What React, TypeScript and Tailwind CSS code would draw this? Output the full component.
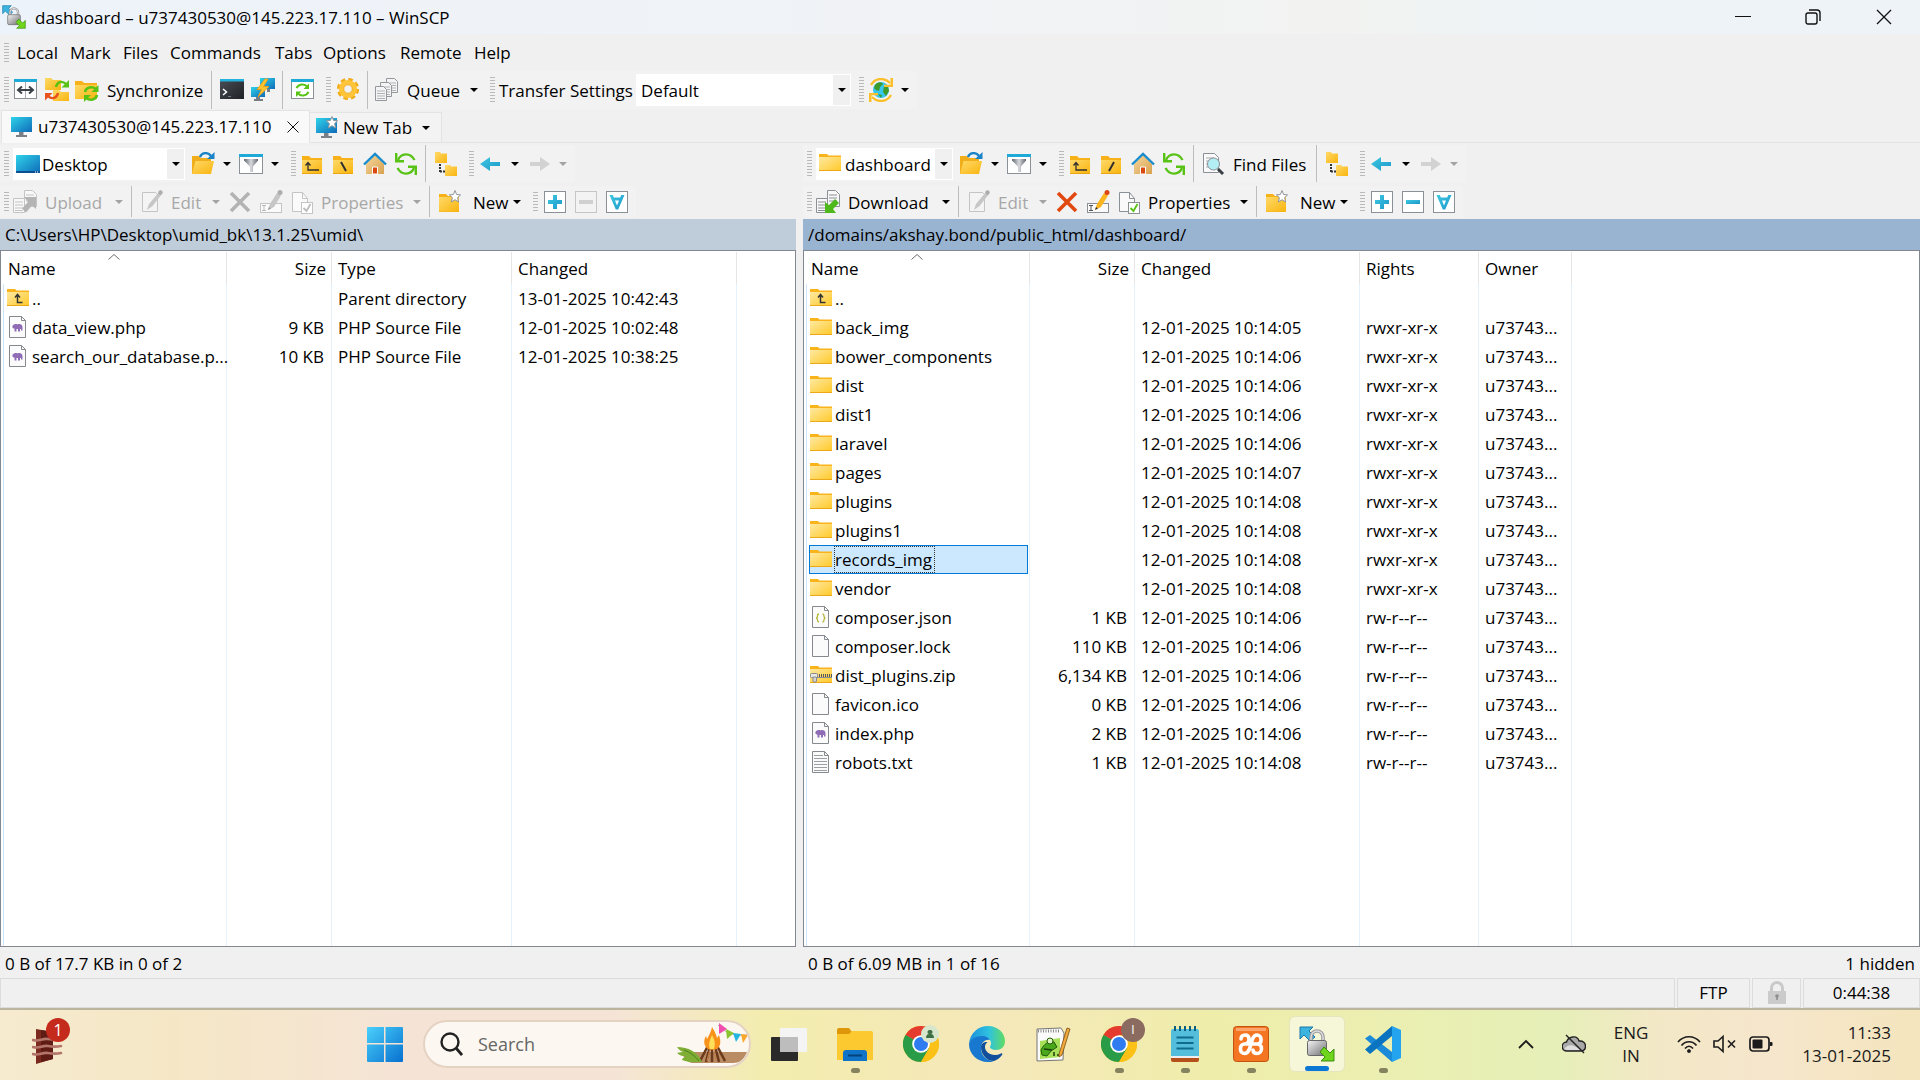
import React from "react";

type Kids = { children?: React.ReactNode };

/* ---------- shared drawing helpers ---------- */

function Defs() {
  return (
    <svg className="absolute h-0 w-0" aria-hidden="true">
      <defs>
        <linearGradient id="gFolder" x1="0" y1="0" x2="1" y2="1">
          <stop offset="0" stopColor="#ffd968" />
          <stop offset="1" stopColor="#f9b50f" />
        </linearGradient>
        <linearGradient id="gFolderLight" x1="0" y1="0" x2="1" y2="1">
          <stop offset="0" stopColor="#ffe9a2" />
          <stop offset="1" stopColor="#ffc928" />
        </linearGradient>
        <linearGradient id="gScreen" x1="0" y1="0" x2="1" y2="1">
          <stop offset="0" stopColor="#2fd3ea" />
          <stop offset="1" stopColor="#0f6bb8" />
        </linearGradient>
        <linearGradient id="gCyan" x1="0" y1="0" x2="1" y2="1">
          <stop offset="0" stopColor="#3cc9e2" />
          <stop offset="1" stopColor="#1f97c9" />
        </linearGradient>
        <linearGradient id="gLock" x1="0" y1="0" x2="1" y2="1">
          <stop offset="0" stopColor="#f4f4f4" />
          <stop offset="1" stopColor="#6f6f73" />
        </linearGradient>
        <linearGradient id="gWin" x1="0" y1="0" x2="1" y2="1">
          <stop offset="0" stopColor="#4bd0fb" />
          <stop offset="1" stopColor="#0670cf" />
        </linearGradient>
        <linearGradient id="gEdge" x1="0" y1="0" x2="1" y2="0">
          <stop offset="0" stopColor="#1c8fdd" />
          <stop offset="0.55" stopColor="#2fc2df" />
          <stop offset="1" stopColor="#5fdc63" />
        </linearGradient>
        <linearGradient id="gTerm" x1="0" y1="0" x2="1" y2="1">
          <stop offset="0" stopColor="#4a4f56" />
          <stop offset="1" stopColor="#1f2226" />
        </linearGradient>
        <linearGradient id="gFunnel" x1="0" y1="0" x2="1" y2="0">
          <stop offset="0" stopColor="#5f656d" />
          <stop offset="0.5" stopColor="#d8dade" />
          <stop offset="1" stopColor="#5f656d" />
        </linearGradient>
        <linearGradient id="gHouse" x1="0" y1="0" x2="1" y2="1">
          <stop offset="0" stopColor="#f5d79d" />
          <stop offset="1" stopColor="#d9a250" />
        </linearGradient>
      </defs>
    </svg>
  );
}

function Icon({ children, box = "0 0 24 24" }: Kids & { box?: string }) {
  return (
    <svg viewBox={box} className="h-6 w-6 shrink-0" fill="none" aria-hidden="true">
      {children}
    </svg>
  );
}

const green = "#58c315";

/* ---------- toolbar icons ---------- */

const SyncBrowse = () => (
  <Icon>
    <rect x="0.5" y="1.5" width="22" height="19" fill="#fff" stroke="#8b9096" />
    <path d="M0 1h23v3H0z" fill="#1fa9d6" />
    <path d="M11.5 4v16" stroke="#a6aab0" />
    <path d="M5 12h13M8 8.5L4 12l4 3.5M15 8.5l4 3.5-4 3.5" stroke="#3c4249" strokeWidth="2" />
  </Icon>
);
const SyncFolders = () => (
  <Icon>
    <path d="M0 0h6l2 2h8v10H0z" fill="url(#gFolder)" />
    <path d="M8 12h6l2 2h8v9H8z" fill="url(#gFolder)" />
    <path d="M11 9c1-5 6-7 10-3" stroke={green} strokeWidth="2.4" />
    <path d="M24 2v7.500h-7.500z" fill={green} />
    <path d="M13 15c-1 5-6 7-10 3" stroke="#e8501c" strokeWidth="2.4" />
    <path d="M0 22.500V15h7.500z" fill="#e8501c" />
  </Icon>
);
const FolderSync = () => (
  <Icon>
    <path d="M0 3h7l2 2h13v16H0z" fill="#f7b21a" />
    <path d="M0 7h22v14H0z" fill="url(#gFolder)" />
    <path d="M10 14c1-5 7-6 11-3" stroke={green} strokeWidth="2.6" />
    <path d="M23.500 7v7h-7z" fill={green} />
    <path d="M22 17c-1 5-7 6-11 3" stroke={green} strokeWidth="2.6" />
    <path d="M9 24v-7h7z" fill={green} />
  </Icon>
);
const Terminal = () => (
  <Icon>
    <path d="M0 1h24v20H0z" fill="url(#gTerm)" />
    <path d="M0 1h24v2.500H0z" fill="#24b2de" />
    <path d="M3 11l3.500 3L3 17" stroke="#fff" strokeWidth="1.500" />
    <path d="M8 18.500h3" stroke="#777d85" />
  </Icon>
);
const Putty = () => (
  <Icon>
    <path d="M9 0h15v11H9z" fill="url(#gScreen)" />
    <path d="M16 11h3v3h-3z" fill="#777d85" />
    <path d="M0 9h14v10H0z" fill="url(#gScreen)" />
    <path d="M5 19h4v2H5zM3 21h9v2H3z" fill="#777d85" />
    <path d="M14 1L6 11.500h4.500L7 19 18 8.500h-5.500L17 1z" fill="#ffc52e" stroke="#f39a12" strokeWidth="0.8" />
  </Icon>
);
const RefreshWindow = () => (
  <Icon>
    <rect x="0.5" y="1.5" width="22" height="19" fill="#fff" stroke="#8b9096" />
    <path d="M0 1h23v3H0z" fill="#1fa9d6" />
    <path d="M5.500 10c2-4 8-5 11-1" stroke={green} strokeWidth="2" />
    <path d="M18 5.500V11h-5.500z" fill={green} />
    <path d="M17.500 14c-2 4-8 5-11 1" stroke={green} strokeWidth="2" />
    <path d="M5 19v-5.500h5.500z" fill={green} />
  </Icon>
);
const Gear = () => (
  <Icon>
    <circle cx="12" cy="11" r="9.6" stroke="#f2ab18" strokeWidth="3" strokeDasharray="4.500 3.040" />
    <circle cx="12" cy="11" r="6.6" stroke="#ffc437" strokeWidth="5" />
    <circle cx="12" cy="11" r="4.2" fill="#f1f1f1" stroke="#eda518" strokeWidth="0.8" />
  </Icon>
);
const DocPath = ({ x, y }: { x: number; y: number }) => (
  <g transform={`translate(${x} ${y})`}>
    <path d="M0.5 0.500h8l3 3v11h-11z" fill="#f4f4f4" stroke="#94989d" />
    <path d="M2 5h8M2 7.500h8M2 10h8M2 12.500h8" stroke="#b0b3b7" />
  </g>
);
const QueueIcon = () => (
  <Icon>
    <DocPath x={11} y={0} />
    <DocPath x={5} y={4} />
    <DocPath x={0} y={8} />
  </Icon>
);
const Globe = () => (
  <Icon>
    <circle cx="12" cy="12" r="8" fill="#37c6ec" />
    <path d="M6 7c3-4 7-3 8-1l-3 3-1 4-3-1-2-2zM15 8l4 1 1 4-3 5-3-4zM9 16l4 1-1 3z" fill="#3f9a2c" />
    <path d="M2 7c4-7 13-8 19-2" stroke="#fcbf2c" strokeWidth="2.400" />
    <path d="M24 0v9h-9V6.800h6.500V0z" fill="#fcbf2c" />
    <path d="M22 17c-4 7-13 8-19 2" stroke="#fcbf2c" strokeWidth="2.400" />
    <path d="M0 24v-9h9v2.200H2.500V24z" fill="#fcbf2c" />
  </Icon>
);
const FolderOpen = () => (
  <Icon>
    <path d="M1 4h7l2 2h10v16H1z" fill="#f2ad1b" />
    <path d="M4.500 9H23l-3 13H1z" fill="url(#gFolder)" />
    <path d="M9 5c2-5 8-5 11-1" stroke="#1b84c9" strokeWidth="2.400" />
    <path d="M23.500 0v7H16z" fill="#1b84c9" />
  </Icon>
);
const Filter = () => (
  <Icon>
    <rect x="0.5" y="2.500" width="23" height="19" fill="#fff" stroke="#8b9096" />
    <path d="M0 2h24v3H0z" fill="#1fa9d6" />
    <path d="M5 7h14v1.500l-5 6V20h-3v-5.500l-6-6z" fill="url(#gFunnel)" />
  </Icon>
);
const FolderBase = ({ children }: Kids) => (
  <Icon>
    <path d="M1 4h7l2 2h11v16H1z" fill="#f7b21a" />
    <path d="M1 8h20v13H1z" fill="url(#gFolder)" />
    <path d="M1 21h20v1H1z" fill="#eba613" />
    {children}
  </Icon>
);
const FolderUp = () => (
  <FolderBase>
    <path d="M7 11v7h11M4.500 13.500L7 10.500l2.500 3" stroke="#2f2f2f" strokeWidth="1.300" />
  </FolderBase>
);
const FolderRoot = ({ remote }: { remote?: boolean }) => (
  <FolderBase>
    <path d={remote ? "M14 10L9 19" : "M9 10l5 9"} stroke="#2f2f2f" strokeWidth="2" />
  </FolderBase>
);
const HomeIcon = () => (
  <Icon>
    <path d="M3 12L12 3l9 9v10H3z" fill="url(#gHouse)" />
    <path d="M1 12.500L12 2l11 10.500" stroke="#1b8ccc" strokeWidth="2.400" />
    <path d="M9.500 15h5v7h-5z" fill="#d9480f" stroke="#fff" />
  </Icon>
);
const Refresh = () => (
  <Icon>
    <path d="M4 8C7 1 16 0 20.500 8" stroke={green} strokeWidth="2.400" />
    <path d="M1 1h2.400v7H10v2.400H1z" fill={green} />
    <path d="M20 16C17 23 8 24 3.500 16" stroke={green} strokeWidth="2.400" />
    <path d="M23 23h-2.400v-7H14v-2.400h9z" fill={green} />
  </Icon>
);
const Tree = () => (
  <Icon>
    <path d="M1 0h5l1 1.500h6V11H1z" fill="url(#gFolder)" />
    <path d="M11 13h5l1 1.500h6V24H11z" fill="url(#gFolder)" />
    <path d="M6 12v9M6 19.500h5" stroke="#333" strokeWidth="2" strokeDasharray="2 1" />
  </Icon>
);
const Back = () => (
  <Icon>
    <path d="M1 12L11 5v5h10v4H11v5z" fill="url(#gCyan)" />
  </Icon>
);
const Forward = () => (
  <Icon>
    <path d="M23 12L13 5v5H3v4h10v5z" fill="#d2d2d2" />
  </Icon>
);
const FindIcon = () => (
  <Icon>
    <path d="M2.500 1.500h11l4 4v15h-15z" fill="#fafafa" stroke="#8b9096" />
    <path d="M5 6h8M5 9h5M5 12h3M5 15h4" stroke="#a5a9ad" />
    <circle cx="12.500" cy="12" r="6" fill="#b4eef5" stroke="#8b9096" />
    <path d="M17 17l5 5" stroke="#3a3f45" strokeWidth="3" />
  </Icon>
);
const Transfer = ({ on }: { on?: boolean }) => {
  const s = on ? "#8b9096" : "#c4c4c4";
  return (
    <Icon>
      <path d="M11.500.5h8l4 4v12h-12z" fill="#f8f8f8" stroke={s} />
      <path d="M13 5h8M13 8h8M13 11h8" stroke={s} />
      <path d="M.5 8.500h11v14H.5z" fill="#f8f8f8" stroke={s} />
      <path d="M2 12h8M2 15h8M2 18h8M2 20.500h8" stroke={s} />
      {on ? (
        <path d="M9 23V12l4 3 6-6 4 4-6 6 3 4z" fill="#4fb81b" />
      ) : (
        <path d="M23 7v12l-4-3.500-6 7-4-4 6-6.500L11 7z" fill="#b4b4b4" />
      )}
    </Icon>
  );
};
const Edit = () => (
  <Icon>
    <path d="M3.500 2.500h13l2 2v17h-15z" fill="#f4f4f4" stroke="#c4c4c4" />
    <path d="M8 20l2-6L20 2l3 2-9.500 12z" fill="#c6c6c6" />
    <circle cx="21.500" cy="2.500" r="2.200" fill="#adadad" />
  </Icon>
);
const Delete = ({ on }: { on?: boolean }) => (
  <Icon>
    <path d="M3 3l18 18M21 3L3 21" stroke={on ? "#e0480f" : "#b3b3b3"} strokeWidth="3.600" />
  </Icon>
);
const Rename = ({ on }: { on?: boolean }) => (
  <Icon>
    <rect x="1.500" y="13.500" width="21" height="9" fill="#fafafa" stroke={on ? "#8b9096" : "#c4c4c4"} />
    <path d="M3 15.500h4M5 15.500v5M3 20.500h4" stroke={on ? "#555" : "#bbb"} />
    <path d="M9 20l2-6L18 3l4 2.500-7 11.500z" fill={on ? "#fbb51f" : "#c6c6c6"} />
    <path d="M9 20l1-3 2 1.500z" fill={on ? "#333" : "#999"} />
    <circle cx="21" cy="2.500" r="2.500" fill={on ? "#dd4716" : "#adadad"} />
  </Icon>
);
const Props = ({ on }: { on?: boolean }) => {
  const s = on ? "#8b9096" : "#c4c4c4";
  return (
    <Icon>
      <path d="M3.500 2.500h10l5 6v13h-15z" fill="#fafafa" stroke={s} />
      <path d="M13.500 2.500v6h5" stroke={s} />
      <rect x="12.500" y="12.500" width="11" height="11" fill="#fff" stroke={s} />
      <path d="M14.500 18l3 3 4-7" stroke={on ? green : "#bcbcbc"} strokeWidth="1.800" />
    </Icon>
  );
};
const NewFolder = () => (
  <Icon>
    <path d="M2 4h7l2 2h11v16H2z" fill="#f7b21a" />
    <path d="M2 7h20v14.500H2z" fill="url(#gFolder)" />
    <path
      d="M18 0.500l1.600 4 4 .4-3 2.700 1 4.400-3.600-2.300-3.600 2.300 1-4.400-3-2.700 4-.4z"
      fill="#fff"
      stroke="#8f949a"
    />
  </Icon>
);
const BoxIcon = ({ d, off }: { d: string; off?: boolean }) => (
  <Icon>
    <rect x="1.500" y="1.500" width="21" height="21" fill={off ? "#f3f3f3" : "#fff"} stroke={off ? "#c6c6c6" : "#8b9096"} />
    <path d={d} fill={off ? "#d0d0d0" : "url(#gCyan)"} fillRule="evenodd" />
  </Icon>
);
const plusD = "M10 5h4v5h5v4h-5v5h-4v-5H5v-4h5z";
const minusD = "M5 10h14v4H5z";
const allD = "M4.500 5h3.300l1 2.500h6.400l1-2.500h3.300L13.200 19.500h-2.400zM10 10.500l2 5 2-5z";

const Monitor = ({ star }: { star?: boolean }) => (
  <Icon>
    <rect x="1" y="2" width="21" height="15" fill="url(#gScreen)" />
    <path d="M9 17h4.500v3H9zM6 20h11v2H6z" fill="#7b8088" />
    {star && (
      <path
        d="M17 0.500l1.600 4 4 .4-3 2.700 1 4.400-3.600-2.300-3.600 2.300 1-4.400-3-2.700 4-.4z"
        fill="#fff"
        stroke="#8f949a"
      />
    )}
  </Icon>
);
const DesktopIcon = () => (
  <Icon>
    <rect x="0" y="3" width="24" height="18" rx="1" fill="url(#gScreen)" />
    <path d="M0 19h24v1a1 1 0 0 1-1 1H1a1 1 0 0 1-1-1z" fill="#0a4f92" />
    <path d="M19 20h1M21 20h1" stroke="#fff" />
  </Icon>
);

function WinScp({ big }: { big?: boolean }) {
  return (
    <svg viewBox="0 0 36 36" className={big ? "h-9 w-9" : "h-6 w-6 shrink-0"} fill="none" aria-hidden="true">
      <path d="M1 1h13l-4 4 6 6-5 4-6-6-4 4z" fill="#3bb4e0" stroke="#1a78a8" />
      <path d="M12 16v-5a6 6 0 0 1 12 0v5" stroke="#9a9a9e" strokeWidth="3.600" />
      <path d="M12 16v-5a6 6 0 0 1 12 0v5" stroke="#dcdcde" strokeWidth="1.500" />
      <rect x="8.500" y="14.500" width="19" height="15" rx="2" fill="url(#gLock)" stroke="#66666a" />
      <path d="M35 35H22l4-4-5-5 4-5 6 6 4-4z" fill="#6ed51c" stroke="#3c8f0e" />
    </svg>
  );
}

/* ---------- file icons ---------- */

const FileFolder = ({ up }: { up?: boolean }) => (
  <Icon box="0 1 24 24">
    <path d="M0 3h8l1.500 1.500H22V8H0z" fill="#f9b41c" />
    <path d="M0 6h22v14H0z" fill="url(#gFolderLight)" />
    <path d="M0 19h22v1H0z" fill="#eda81a" />
    {up && <path d="M10.500 9v7.500h5M8 11.500l2.500-3 2.500 3" stroke="#333" strokeWidth="1.500" />}
  </Icon>
);
const FileDoc = ({ kind }: { kind: string }) => (
  <Icon box="0 1 24 24">
    <path d="M2.500 1.500h12l4 4v17h-16z" fill="#fbfbfb" stroke="#85888c" />
    <path d="M14.500 1.500v4h4" stroke="#85888c" />
    {kind === "php" && (
      <path d="M5.500 11c1-2 4-2.500 5-1.500 2-1 5 0 5 2.500v3.500h-1.500V14h-1v2.500h-2V14H9.500v2.500h-2V13.500C6 14 5 12.500 5.500 11z" fill="#8f6cb5" />
    )}
    {kind === "json" && (
      <path
        d="M9 9c-1.500 0-1.500.8-1.500 2s0 2-1.500 2c1.500 0 1.500.8 1.500 2s0 2 1.500 2M12.500 9c1.500 0 1.500.8 1.500 2s0 2 1.500 2c-1.500 0-1.500.8-1.500 2s0 2-1.500 2"
        stroke="#b5b83c"
        strokeWidth="1.300"
      />
    )}
    {kind === "txt" && <path d="M4 5.500h9M4 8.500h13M4 11.500h13M4 14.500h13M4 17.500h13M4 20.500h13" stroke="#9b9ea2" strokeWidth="1.200" />}
  </Icon>
);
const FileZip = () => (
  <Icon box="0 1 24 24">
    <path d="M0 3h8l1.500 1.500H22V8H0z" fill="#f9b41c" />
    <path d="M0 6h22v14H0z" fill="url(#gFolderLight)" />
    <path d="M0 19h22v1H0z" fill="#eda81a" />
    <path d="M7 12.500h15" stroke="#55595e" strokeWidth="3" strokeDasharray="1 1" />
    <path d="M7 14.500h15" stroke="#8a8e93" />
    <rect x="0.500" y="10.500" width="7" height="4" rx="1" fill="#e8e8e8" stroke="#888" />
    <rect x="3" y="14" width="3.500" height="5" rx="1" fill="#d6d6d6" stroke="#888" />
  </Icon>
);

function FileIcon({ kind }: { kind: string }) {
  if (kind === "up") return <FileFolder up />;
  if (kind === "folder") return <FileFolder />;
  if (kind === "zip") return <FileZip />;
  return <FileDoc kind={kind} />;
}

/* ---------- toolbar pieces ---------- */

function Grip({ tall }: { tall?: boolean }) {
  return (
    <span
      className={`${tall ? "h-[26px]" : "h-5"} mr-px ml-1 w-[5px] shrink-0 bg-[repeating-linear-gradient(to_bottom,#b9b9b9_0_1px,transparent_1px_3px)]`}
    />
  );
}
const Sep = () => (
  <span className="flex w-[9px] shrink-0 justify-center self-stretch">
    <span className="w-px bg-[#bdbdbd]" />
  </span>
);

function Btn({ label, disabled, children }: Kids & { label: string; disabled?: boolean }) {
  return (
    <button type="button" aria-label={label} title={label} disabled={disabled} className="flex h-8 w-[31px] shrink-0 items-center justify-center">
      {children}
    </button>
  );
}
function Tri({ off }: { off?: boolean }) {
  return (
    <svg viewBox="0 0 8 4" className="h-1 w-2" aria-hidden="true">
      <path d="M0 0h8L4 4z" fill={off ? "#a3a3a3" : "#000"} />
    </svg>
  );
}
function Caret({ label, disabled }: { label: string; disabled?: boolean }) {
  return (
    <button type="button" aria-label={label} disabled={disabled} className="flex h-8 w-[17px] shrink-0 items-center justify-center">
      <Tri off={disabled} />
    </button>
  );
}
function TextBtn({ icon, text, w, disabled }: { icon: React.ReactNode; text: string; w: string; disabled?: boolean }) {
  return (
    <button
      type="button"
      disabled={disabled}
      className={`${w} ${disabled ? "text-[#a7a7a7]" : "text-black"} flex h-8 shrink-0 items-center gap-2 pl-[3px] whitespace-nowrap`}
    >
      {icon}
      <span className="pt-0.5">{text}</span>
    </button>
  );
}
function Combo({ label, options, icon, w }: { label: string; options: string[]; icon?: React.ReactNode; w: string }) {
  return (
    <span className={`${w} flex h-8 shrink-0 items-center bg-white pl-[3px]`}>
      {icon}
      <select aria-label={label} className="mr-1 h-8 min-w-0 flex-1 appearance-none overflow-hidden bg-transparent pt-0.5 pl-0.5 outline-none">
        {options.map((o) => (
          <option key={o}>{o}</option>
        ))}
      </select>
      <span className="m-px flex h-[30px] w-[17px] shrink-0 items-center justify-center bg-[#f0f0f0]">
        <Tri />
      </span>
    </span>
  );
}
const Group = ({ children }: Kids) => <div className="flex items-center self-stretch bg-[#f2f2f2] pr-1">{children}</div>;

function PanelToolbars({ remote }: { remote?: boolean }) {
  const off = !remote;
  return (
    <>
      <div className="flex h-[41px] items-center py-0.5">
        <Group>
          <Grip tall />
          <span className="w-[3px]" />
          <Combo
            label={remote ? "Remote directory" : "Local drive"}
            options={[remote ? "dashboard" : "Desktop"]}
            icon={remote ? <FileFolder /> : <DesktopIcon />}
            w={remote ? "w-[137px]" : "w-[172px]"}
          />
          <span className="w-0.5" />
          <Btn label="Open directory"><FolderOpen /></Btn>
          <Caret label="Open directory options" />
          <Btn label="Filter"><Filter /></Btn>
          <Caret label="Filter options" />
        </Group>
        <Group>
          <Grip tall />
          <Btn label="Parent directory"><FolderUp /></Btn>
          <Btn label="Root directory"><FolderRoot remote={remote} /></Btn>
          <Btn label="Home directory"><HomeIcon /></Btn>
          <Btn label="Refresh"><Refresh /></Btn>
          <Sep />
          {remote && (
            <>
              <TextBtn icon={<FindIcon />} text="Find Files" w="w-[114px]" />
              <Sep />
            </>
          )}
          <Btn label="Directory tree"><Tree /></Btn>
        </Group>
        <Group>
          <Grip tall />
          <Btn label="Back"><Back /></Btn>
          <Caret label="Back history" />
          <Btn label="Forward" disabled><Forward /></Btn>
          <Caret label="Forward history" disabled />
        </Group>
      </div>
      <div className="flex h-[35px] items-center py-0.5">
        <Group>
          <Grip />
          <TextBtn icon={<Transfer on={remote} />} text={remote ? "Download" : "Upload"} w={remote ? "w-[124px]" : "w-[100px]"} disabled={off} />
          <Caret label="Transfer options" disabled={off} />
          <Sep />
          <TextBtn icon={<Edit />} text="Edit" w="w-[71px]" disabled />
          <Caret label="Edit options" disabled />
          <Btn label="Delete" disabled={off}><Delete on={remote} /></Btn>
          <Btn label="Rename" disabled={off}><Rename on={remote} /></Btn>
          <TextBtn icon={<Props on={remote} />} text="Properties" w="w-[122px]" disabled={off} />
          <Caret label="Properties options" disabled={off} />
          <Sep />
          <TextBtn icon={<span className="pr-1"><NewFolder /></span>} text="New" w="w-[74px]" />
          <Caret label="New options" />
        </Group>
        <Group>
          <Grip />
          <Btn label="Select"><BoxIcon d={plusD} /></Btn>
          <Btn label="Unselect" disabled={off}><BoxIcon d={minusD} off={off} /></Btn>
          <Btn label="Select all"><BoxIcon d={allD} /></Btn>
        </Group>
      </div>
    </>
  );
}

/* ---------- file lists ---------- */

type Row = { icon: string; cells: string[]; selected?: boolean };
const r = (icon: string, name: string, size: string, time: string, rights: string): Row => ({
  icon,
  cells: [name, size, time && `12-01-2025 10:14:${time}`, rights, rights && "u73743..."],
  selected: name === "records_img",
});
const D = "rwxr-xr-x";
const F = "rw-r--r--";
const remoteRows: Row[] = [
  r("up", "..", "", "", ""),
  r("folder", "back_img", "", "05", D),
  r("folder", "bower_components", "", "06", D),
  r("folder", "dist", "", "06", D),
  r("folder", "dist1", "", "06", D),
  r("folder", "laravel", "", "06", D),
  r("folder", "pages", "", "07", D),
  r("folder", "plugins", "", "08", D),
  r("folder", "plugins1", "", "08", D),
  r("folder", "records_img", "", "08", D),
  r("folder", "vendor", "", "08", D),
  r("json", "composer.json", "1 KB", "06", F),
  r("file", "composer.lock", "110 KB", "06", F),
  r("zip", "dist_plugins.zip", "6,134 KB", "06", F),
  r("file", "favicon.ico", "0 KB", "06", F),
  r("php", "index.php", "2 KB", "06", F),
  r("txt", "robots.txt", "1 KB", "08", F),
];
const localRows: Row[] = [
  { icon: "up", cells: ["..", "", "Parent directory", "13-01-2025 10:42:43"] },
  { icon: "php", cells: ["data_view.php", "9 KB", "PHP Source File", "12-01-2025 10:02:48"] },
  { icon: "php", cells: ["search_our_database.p...", "10 KB", "PHP Source File", "12-01-2025 10:38:25"] },
];

function FileTable({ heads, widths, rows }: { heads: string[]; widths: string[]; rows: Row[] }) {
  return (
    <div className="min-h-0 flex-1 border border-[#828790] bg-white pt-px pl-0.5">
      <table className="h-full w-full table-fixed border-separate border-spacing-0">
        <colgroup>
          {widths.map((w, i) => (
            <col key={i} className={w} />
          ))}
          <col />
        </colgroup>
        <thead>
          <tr className="h-8">
            {heads.map((h, i) => (
              <th
                key={h}
                scope="col"
                className={`relative border-r border-[#e5e5e5] pt-0.5 pb-0 font-normal ${i === 1 ? "pr-[5px] pl-0 text-right" : i === 0 ? "pr-0 pl-[5px] text-left" : "pr-0 pl-1.5 text-left"}`}
              >
                {h}
                {i === 0 && (
                  <svg viewBox="0 0 12 6" className="absolute top-0.5 left-[105px] h-1.5 w-3" fill="none" aria-hidden="true">
                    <path d="M0.500 5.500l5.500-5 5.500 5" stroke="#6b6b6b" />
                  </svg>
                )}
              </th>
            ))}
            <td />
          </tr>
        </thead>
        <tbody>
          {rows.map((row) => (
            <tr key={row.cells[0]} className="h-[29px]">
              {row.cells.map((c, i) => (
                <td
                  key={i}
                  className={`border-r border-[#e5f1fb] py-0 leading-7 whitespace-nowrap ${
                    i === 0 ? "border-l border-l-[#cfe4f7] px-0" : i === 1 ? "pr-[7px] pl-0 text-right" : "pr-0 pl-1.5"
                  }`}
                >
                  {i === 0 ? (
                    <div
                      className={`mr-px ml-0.5 flex h-[29px] items-center border ${
                        row.selected ? "border-[#0078d7] bg-[#cce8ff]" : "border-transparent"
                      }`}
                    >
                      <FileIcon kind={row.icon} />
                      <span className={`border border-dotted pr-0.5 leading-[25px] ${row.selected ? "border-[#333]" : "border-transparent"}`}>{c}</span>
                    </div>
                  ) : (
                    c
                  )}
                </td>
              ))}
              <td />
            </tr>
          ))}
          <tr>
            {heads.map((h, i) => (
              <td key={h} className={`border-r border-[#e5f1fb] p-0 ${i === 0 ? "border-l border-l-[#cfe4f7]" : ""}`} />
            ))}
            <td />
          </tr>
        </tbody>
      </table>
    </div>
  );
}

/* ---------- taskbar drawings ---------- */

const Big = ({ children }: Kids) => (
  <svg viewBox="0 0 36 36" className="h-9 w-9" fill="none" aria-hidden="true">
    {children}
  </svg>
);
const Chrome = () => (
  <Big>
    <circle cx="18" cy="18" r="18" fill="#fbc116" />
    <path d="M18 18L2.400 9A18 18 0 0 1 33.600 9z" fill="#e53a2e" />
    <path d="M2.400 9A18 18 0 0 0 18 36l8-13.500L18 18z" fill="#2a9c48" />
    <path d="M2.400 9l8 13.500L18 18z" fill="#2a9c48" />
    <path d="M18 9h15.600A18 18 0 0 1 18 36l8-13.500z" fill="#fbc116" />
    <circle cx="18" cy="18" r="8.800" fill="#fff" />
    <circle cx="18" cy="18" r="7" fill="#2f7bf0" />
  </Big>
);
const Edge = () => (
  <Big>
    <path d="M0 18C1 7 9 0 19 0c10 0 17 7 17 15 0 6-4 9-9 9-4 0-6-1.500-6-3 0-1 1-1.500 1-4 0-3-3-6-8-6-7 0-13 4-14 7z" fill="url(#gEdge)" />
    <path d="M0 18c1-4 6-8 13-8 4 0 7 2 8 4-4-1-9 2-9 8 0 8 6 13 13 13-2 1-4 1-6 1C8 36 0 28 0 18z" fill="#1878cf" />
    <path d="M12 21c0 8 6 14 13 14 3-1 6-3 8-6 1-1 0-2-1-1.500-2 1-4 1.500-6 1.500-6 0-10-4-10-8 0-2 1-4 2.500-5C14 16 12 18 12 21z" fill="#114f9c" />
  </Big>
);
const Explorer = () => (
  <Big>
    <path d="M0 4a2 2 0 0 1 2-2h10l3 4h6v4H0z" fill="#dd9708" />
    <path d="M0 8l12 0 3-3h19a2 2 0 0 1 2 2v27H0z" fill="#fdc931" />
    <path d="M6 35V27a3 3 0 0 1 3-3h18a3 3 0 0 1 3 3v8z" fill="#0f73c8" />
    <path d="M11 29.500h14" stroke="#06427a" strokeWidth="2" />
  </Big>
);
const TaskView = () => (
  <Big>
    <rect x="0" y="11" width="27" height="24" rx="1" fill="#2a2a2a" />
    <rect x="9" y="2" width="27" height="24" rx="1" fill="#f4f4f4" />
    <path d="M9 11h18v15H9z" fill="#bdbdbd" />
  </Big>
);
const NotepadPP = () => (
  <Big>
    <path d="M2 3l24-1 3 5-1 27-26 1z" fill="#fbfbfb" stroke="#777" />
    <path d="M3 5h22" stroke="#888" strokeWidth="3" strokeDasharray="1 1.500" />
    <path d="M5 15l20-3v19L5 33z" fill="#a8e05a" />
    <path d="M6 24c3-6 8-10 13-8l3 5-6 4-4 5-5-1z" fill="#49a81c" stroke="#235c0b" />
    <circle cx="15" cy="15" r="3" fill="#dff4c0" stroke="#235c0b" />
    <path d="M9 23l8 1M19 26v4M22 29h2" stroke="#1c3d0c" strokeWidth="1.500" />
    <path d="M24 28l8-26 3 1-8 26-3 2z" fill="#f0a93a" stroke="#7a4b12" strokeWidth="0.800" />
  </Big>
);
const Notepad = () => (
  <Big>
    <path d="M4 29h28v5a2 2 0 0 1-2 2H6a2 2 0 0 1-2-2z" fill="#b6501a" />
    <path d="M4 28h28v4H4z" fill="#eee" />
    <path d="M4 5a2 2 0 0 1 2-2h24a2 2 0 0 1 2 2v25H4z" fill="#54bddb" />
    <path d="M8 0v5M13 0v5M18 0v5M23 0v5M28 0v5" stroke="#0b5f7d" strokeWidth="2" />
    <path d="M9.500 11.500h17M9.500 17h17M9.500 22.500h17" stroke="#0e6d8d" strokeWidth="1.800" />
  </Big>
);
const Xampp = () => (
  <Big>
    <rect x="0.500" y="0.500" width="35" height="35" rx="3" fill="#f47522" stroke="#c25310" />
    <path d="M3 2h30v3H3z" fill="#f9a56c" />
    <path
      d="M16 18H11.500a4 4 0 0 0-4 4v1.500a4 4 0 0 0 4 4c3 0 4-2 5-4.500l3-10c1-2.500 2-4 4.500-4a4 4 0 0 1 4 4v1.500c0 2-1.500 3.500-4 3.500h-4M24 18c2.500 0 4.500 1.500 4.500 4.500s-2 5-4.500 5-4-1.500-4-3.500M8 13c0-2.500 1.500-4 4-4s4 1.500 4 4-1.500 5-4.500 5"
      stroke="#fff"
      strokeWidth="3.600"
      strokeLinecap="round"
      strokeLinejoin="round"
    />
  </Big>
);
const VsCode = () => (
  <Big>
    <path d="M0 12.500L5 9l22 17v10z" fill="#1b8ad8" />
    <path d="M0 23.500L5 28l22-18V0z" fill="#0b74c0" />
    <path d="M27 0l9 4v28l-9 4z" fill="#24a3ee" />
  </Big>
);
const RackIcon = () => (
  <svg viewBox="0 0 32 36" className="h-9 w-8" fill="none" aria-hidden="true">
    <path d="M4 1l17 3v27L4 36z" fill="#7a2a1e" />
    <path d="M9 2l12 2v27L9 34z" fill="#5f1c14" />
    <path
      d="M1 12c6 2 9-2 15-1s8 1 12 1M1 19c6 2 9-2 15-1s8 1 13 0M1 26c6 2 9-2 15-1s8 1 13 0"
      stroke="#b4766b"
      strokeWidth="2.600"
      strokeLinecap="round"
    />
  </svg>
);
const Campfire = () => (
  <svg viewBox="0 0 72 44" className="h-11 w-[72px] shrink-0" fill="none" aria-hidden="true">
    <path d="M6 30h65c-3 8-8 11-14 11H16c-5-1-9-5-10-11z" fill="#b98c64" />
    <path d="M34 20l-10 19M35 20l-5 20M36 20v20M38 20l5 20M39 20l10 19" stroke="#6d3a1b" strokeWidth="2.600" />
    <path d="M37 22l3 17M35 24l-4 15" stroke="#c07c45" strokeWidth="1.200" />
    <path d="M36 5c3 5 4 7 5 11l2-3c2 6 2 11-2 14-2 1-7 1-9 0-4-3-5-8-2-13l1 3c2-4 4-7 5-12z" fill="#f9921a" />
    <path d="M36 13c2 4 4 8 2 14h-4c-2-5 0-9 2-14z" fill="#ffdf5a" />
    <path d="M26 40C22 30 12 25 1 25c2 3 4 4 6 5-3 0-5 1-6 1 3 3 6 3 9 3-2 1-4 3-4 4 7 3 14 2 20 2z" fill="#7fae34" />
    <path d="M8 28c6 2 11 6 15 11" stroke="#4f7d1c" />
    <path d="M42 3c8 9 18 11 29 10" stroke="#999" strokeWidth="0.800" />
    <path d="M43 1l8 6-8 5z" fill="#f04fb0" />
    <path d="M50 7l8 4-7 6z" fill="#8bc431" />
    <path d="M57 11l8 1-5 8z" fill="#22b5de" />
    <path d="M65 12l7 1-5 8z" fill="#f9a72b" />
  </svg>
);

function Task({ label, run, active, children }: Kids & { label: string; run?: boolean; active?: boolean }) {
  return (
    <button
      type="button"
      aria-label={label}
      className={`relative mx-[5px] flex h-14 w-14 shrink-0 items-center justify-center rounded-md ${active ? "border border-[#e6e5bd] bg-[#f6f6d8]" : ""}`}
    >
      {children}
      {active && <span className="absolute bottom-0 h-[5px] w-6 rounded-full bg-[#0b78d4]" />}
      {run && <span className="absolute -bottom-px h-[5px] w-[9px] rounded-full bg-[#85835f]" />}
    </button>
  );
}

function Taskbar() {
  return (
    <footer className="flex h-[72px] shrink-0 items-center border-t-2 border-[#bab59c] bg-[linear-gradient(to_right,#f6ebcf_0%,#f5e7c6_9%,#f5e4d6_21%,#f5e4d6_32%,#f3edae_40%,#f4e9b6_48%,#f5e8ba_52%,#efedaa_63%,#eaefb2_74%,#e6efb8_81%,#f2e8c6_86%,#f6e6cc_92%,#f4e5bd_100%)] pb-0.5 text-[#1b1b1b]">
      <button type="button" aria-label="Widgets" className="relative mb-1 ml-8 h-12 w-10 pt-2">
        <RackIcon />
        <span className="absolute top-0 right-0.5 flex h-6 w-6 items-center justify-center rounded-full bg-[#c42b1c] text-base text-white">1</span>
      </button>
      <div className="flex flex-1 items-center pl-[285px]">
        <button type="button" aria-label="Start" className="flex h-14 w-14 shrink-0 items-center justify-center">
          <Big>
            <path d="M0 2a1 1 0 0 1 1-1h16v16H0zM18.500 1H35a1 1 0 0 1 1 1v15H18.500zM0 18.500h17V36H1a1 1 0 0 1-1-1zM18.500 18.500H36V35a1 1 0 0 1-1 1H18.500z" fill="url(#gWin)" />
          </Big>
        </button>
        <label className="ml-[10px] flex h-12 w-[328px] shrink-0 items-center overflow-hidden rounded-full border-2 border-[#e4d3c2] bg-[#fcf7f0] pr-px pl-[14px]">
          <svg viewBox="0 0 24 24" className="mr-[15px] h-6 w-6 shrink-0" fill="none" aria-hidden="true">
            <circle cx="11" cy="10" r="8.500" stroke="#222" strokeWidth="2.400" />
            <path d="M17 16l6 7" stroke="#222" strokeWidth="2.800" />
          </svg>
          <input type="search" aria-label="Search" placeholder="Search" className="min-w-0 flex-1 bg-transparent text-lg outline-none placeholder:text-[#666]" />
          <Campfire />
        </label>
        <span className="w-[5px]" />
        <Task label="Task view"><TaskView /></Task>
        <Task label="File Explorer" run><Explorer /></Task>
        <Task label="Google Chrome">
          <Chrome />
          <span className="absolute top-[9px] right-2.5 flex h-[18px] w-[18px] items-center justify-center rounded-full bg-[#d7e6cc]">
            <svg viewBox="0 0 10 10" className="h-2.5 w-2.5" aria-hidden="true">
              <path d="M5 1a2 2 0 0 1 1 4c2 0 3 2 3 4H1c0-2 1-4 3-4a2 2 0 0 1 1-4z" fill="#3f7045" />
            </svg>
          </span>
        </Task>
        <Task label="Microsoft Edge"><Edge /></Task>
        <Task label="Notepad++"><NotepadPP /></Task>
        <Task label="Google Chrome, second profile" run>
          <Chrome />
          <span className="absolute top-0.5 right-0.5 flex h-6 w-6 items-center justify-center rounded-full bg-[#8b6b60] text-xs text-white">I</span>
        </Task>
        <Task label="Notepad" run><Notepad /></Task>
        <Task label="XAMPP" run><Xampp /></Task>
        <Task label="WinSCP" active><WinScp big /></Task>
        <Task label="Visual Studio Code" run><VsCode /></Task>
      </div>
      <div className="flex shrink-0 items-center pr-[29px]">
        <button type="button" aria-label="Show hidden icons" className="flex w-12 justify-center">
          <svg viewBox="0 0 16 10" className="h-2.5 w-4" fill="none" aria-hidden="true">
            <path d="M1 9l7-7 7 7" stroke="#1b1b1b" strokeWidth="1.800" />
          </svg>
        </button>
        <button type="button" aria-label="OneDrive" className="flex w-12 justify-center">
          <svg viewBox="0 0 24 20" className="h-5 w-6" fill="none" aria-hidden="true">
            <path d="M5 17a4.500 4.500 0 0 1-.5-9C6 3 15 0 17 7c4-.5 6.500 2 6.500 5s-2 5-5 5z" fill="#a9a9a9" stroke="#222" strokeWidth="1.400" />
            <path d="M2 15c4-5 8-4 10-3l8 4H5z" fill="#dedede" />
            <path d="M4 1l18 18" stroke="#222" strokeWidth="1.500" />
          </svg>
        </button>
        <button type="button" className="w-[66px] text-center leading-[23px]">
          ENG
          <br />
          IN
        </button>
        <button type="button" aria-label="Network, sound and battery" className="flex w-[122px] items-center justify-center gap-3">
          <svg viewBox="0 0 24 20" className="h-5 w-6" fill="none" stroke="#1b1b1b" strokeWidth="1.700" aria-hidden="true">
            <path d="M1 8c6-7 16-7 22 0M4.500 11.500c4-5 11-5 15 0M8 14.500c2.500-3 5.500-3 8 0" />
            <circle cx="12" cy="17" r="1.500" fill="#1b1b1b" stroke="none" />
            <circle cx="12" cy="17" r="1" />
          </svg>
          <svg viewBox="0 0 24 20" className="h-5 w-6" fill="none" stroke="#1b1b1b" strokeWidth="1.600" aria-hidden="true">
            <path d="M1 7h4l5-4.500v15L5 13H1zM15 6.500l7 7M22 6.500l-7 7" />
          </svg>
          <svg viewBox="0 0 24 20" className="h-5 w-6" fill="none" aria-hidden="true">
            <rect x="1" y="3" width="19" height="14" rx="3" stroke="#1b1b1b" strokeWidth="1.700" />
            <rect x="3.500" y="5.500" width="10" height="9" rx="1" fill="#1b1b1b" />
            <path d="M21 8h1.500a1 1 0 0 1 1 1v2a1 1 0 0 1-1 1H21z" fill="#1b1b1b" />
          </svg>
        </button>
        <button type="button" className="w-[105px] text-right leading-[23px] whitespace-nowrap">
          11:33
          <br />
          13-01-2025
        </button>
      </div>
    </footer>
  );
}

/* ---------- page ---------- */

const menus = [
  ["Local", "w-[53px]"],
  ["Mark", "w-[53px]"],
  ["Files", "w-[47px]"],
  ["Commands", "w-[105px]"],
  ["Tabs", "w-12"],
  ["Options", "w-[77px]"],
  ["Remote", "w-[74px]"],
  ["Help", "w-12"],
];

export default function App() {
  return (
    <div className="flex h-screen flex-col overflow-hidden bg-[#f0f0f0] font-['Open_Sans','Noto_Sans',sans-serif] text-[17px] text-black">
      <Defs />
      <header className="flex h-[34px] shrink-0 items-center bg-[linear-gradient(to_right,#edf3fa,#f1f3f6_50%,#f2f3f1_70%,#edf3f7_82%)] pl-0.5">
        <WinScp />
        <h1 className="ml-[9px] flex-1 pt-px">dashboard – u737430530@145.223.17.110 – WinSCP</h1>
        <button type="button" aria-label="Minimize" className="flex h-8 w-[70px] items-center justify-center">
          <svg viewBox="0 0 16 16" className="h-4 w-4" fill="none" stroke="#111" aria-hidden="true"><path d="M0 7.500h16" /></svg>
        </button>
        <button type="button" aria-label="Restore" className="flex h-8 w-[70px] items-center justify-center">
          <svg viewBox="0 0 16 16" className="h-4 w-4" fill="none" stroke="#111" strokeWidth="1.400" aria-hidden="true">
            <rect x="1" y="4" width="11" height="11" rx="2" />
            <path d="M4 1h8a3 3 0 0 1 3 3v8" />
          </svg>
        </button>
        <button type="button" aria-label="Close" className="flex h-8 w-[72px] items-center justify-center">
          <svg viewBox="0 0 16 16" className="h-4 w-4" fill="none" stroke="#111" strokeWidth="1.300" aria-hidden="true"><path d="M1 1l14 14M15 1L1 15" /></svg>
        </button>
      </header>

      <nav aria-label="Main menu" className="flex h-[37px] shrink-0 items-center">
        <Grip />
        <span className="w-[7px]" />
        {menus.map(([m, w]) => (
          <button key={m} type="button" className={`${w} text-left`}>
            {m}
          </button>
        ))}
      </nav>

      <div className="flex h-[38px] shrink-0 items-center">
        <Group>
          <Grip tall />
          <Btn label="Synchronize browsing"><SyncBrowse /></Btn>
          <Btn label="Compare directories"><SyncFolders /></Btn>
          <TextBtn icon={<FolderSync />} text="Synchronize" w="w-[135px]" />
          <Sep />
          <Btn label="Open terminal"><Terminal /></Btn>
          <Btn label="Open in PuTTY"><Putty /></Btn>
          <Sep />
          <Btn label="Keep remote directory up to date"><RefreshWindow /></Btn>
        </Group>
        <Group>
          <Grip tall />
          <Btn label="Preferences"><Gear /></Btn>
          <Sep />
          <TextBtn icon={<QueueIcon />} text="Queue" w="w-[93px]" />
          <Caret label="Queue options" />
        </Group>
        <Group>
          <Grip tall />
          <span className="w-[140px] pt-0.5 pl-[3px] whitespace-nowrap">Transfer Settings</span>
          <Combo label="Transfer Settings" options={["Default"]} w="w-[215px]" />
        </Group>
        <Group>
          <Grip tall />
          <Btn label="Synchronize time"><Globe /></Btn>
          <Caret label="Synchronize time options" />
        </Group>
      </div>

      <div className="flex h-[34px] shrink-0 items-end border-b border-[#e3e3e3]" role="tablist">
        <div className="-mb-px ml-px flex h-[33px] w-[309px] items-center justify-between border border-[#e3e3e3] border-b-[#f9f9f9] bg-[#f9f9f9] pr-[10px] pl-2">
          <button type="button" role="tab" aria-selected="true" className="flex items-center gap-1">
            <Monitor />
            u737430530@145.223.17.110
          </button>
          <button type="button" aria-label="Close tab">
            <svg viewBox="0 0 12 12" className="h-3 w-3" stroke="#111" aria-hidden="true"><path d="M.5.5l11 11M11.500.5l-11 11" /></svg>
          </button>
        </div>
        <button type="button" role="tab" aria-selected="false" className="flex h-[30px] w-[132px] items-center gap-1 border border-b-0 border-l-0 border-[#e3e3e3] bg-[#f3f3f3] pl-[5px] whitespace-nowrap">
          <Monitor star />
          New Tab
          <span className="ml-1.5"><Tri /></span>
        </button>
      </div>

      <main className="flex min-h-0 flex-1">
        <section aria-label="Local files" className="flex w-[796px] shrink-0 flex-col">
          <PanelToolbars />
          <div className="flex h-[31px] shrink-0 items-center bg-[#bfcddb] pt-px pl-[5px]">C:\Users\HP\Desktop\umid_bk\13.1.25\umid\</div>
          <FileTable heads={["Name", "Size", "Type", "Changed"]} widths={["w-[224px]", "w-[105px]", "w-[180px]", "w-[225px]"]} rows={localRows} />
          <p className="flex h-[31px] shrink-0 items-center pt-0.5 pl-[5px]">0 B of 17.7 KB in 0 of 2</p>
        </section>
        <section aria-label="Remote files" className="ml-[7px] flex min-w-0 flex-1 flex-col">
          <PanelToolbars remote />
          <div className="flex h-[31px] shrink-0 items-center bg-[#99b4d1] pt-px pl-[5px]">/domains/akshay.bond/public_html/dashboard/</div>
          <FileTable
            heads={["Name", "Size", "Changed", "Rights", "Owner"]}
            widths={["w-[224px]", "w-[105px]", "w-[225px]", "w-[119px]", "w-[93px]"]}
            rows={remoteRows}
          />
          <p className="flex h-[31px] shrink-0 items-center justify-between pt-0.5 pr-[5px] pl-[5px]">
            <span>0 B of 6.09 MB in 1 of 16</span>
            <span>1 hidden</span>
          </p>
        </section>
      </main>

      <div className="flex h-[30px] shrink-0 gap-0.5" aria-label="Session status">
        <span className="flex-1 border border-[#dcdcdc]" />
        <span className="flex w-[73px] items-center justify-center border border-[#dcdcdc]">FTP</span>
        <span className="flex w-[49px] items-center justify-center border border-[#dcdcdc]">
          <svg viewBox="0 0 18 24" className="h-6 w-[18px]" fill="none" aria-hidden="true">
            <path d="M3.500 11V7a5.500 5.500 0 0 1 11 0v4" stroke="#c9c9c9" strokeWidth="3" />
            <path d="M0 10h18v13H0z" fill="#cbcbcb" />
            <circle cx="9" cy="15" r="1.800" fill="#8f8f8f" />
            <path d="M8.200 15h1.600v4H8.200z" fill="#8f8f8f" />
          </svg>
        </span>
        <span className="flex w-[117px] items-center justify-center border border-[#dcdcdc]">0:44:38</span>
      </div>

      <Taskbar />
    </div>
  );
}
